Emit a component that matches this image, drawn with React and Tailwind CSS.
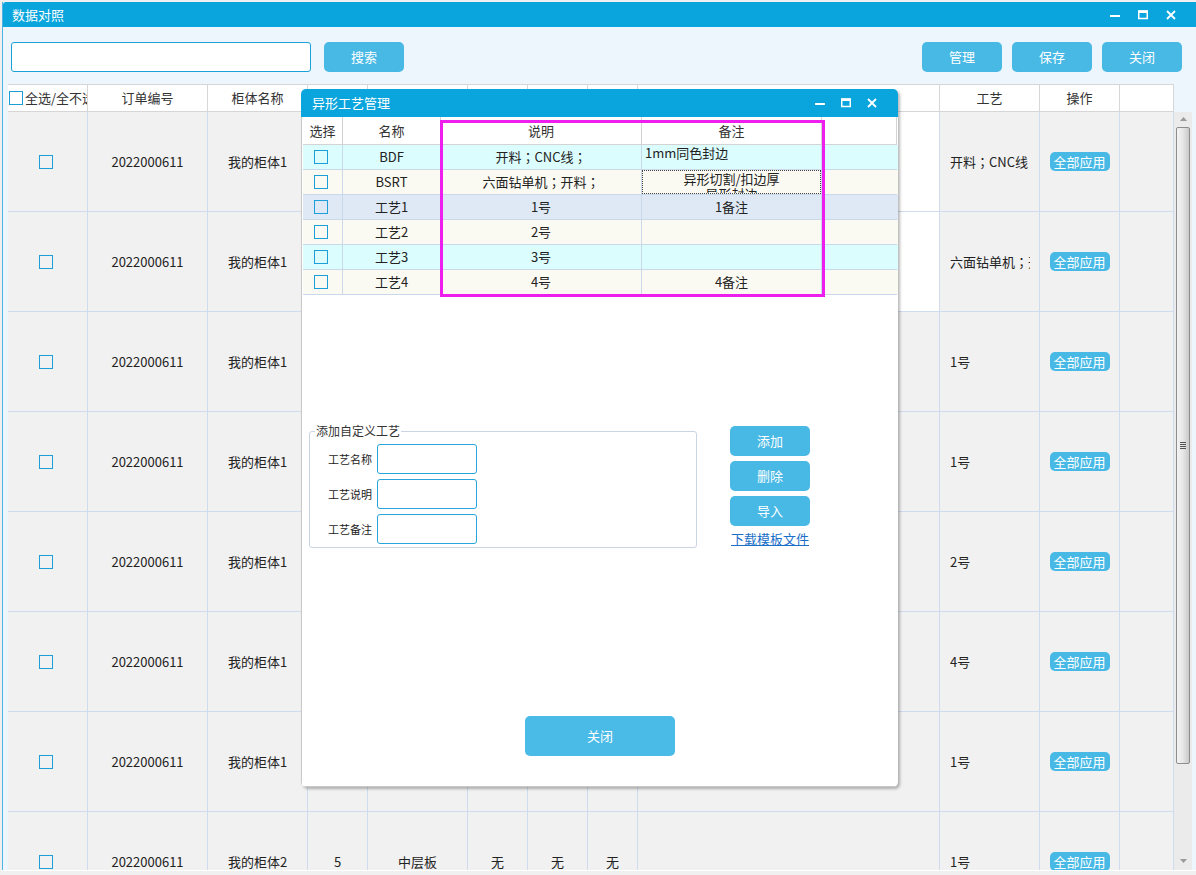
import React from 'react';

const mainCols = [80, 120, 100, 60, 100, 60, 60, 50, 302, 100, 80, 54];
const mainHeads = ['全选/全不选', '订单编号', '柜体名称', '', '', '', '', '', '', '工艺', '操作', ''];

const mainRows = [
  { name: '我的柜体1', craft: ['开料', 'CNC线'], white: true },
  { name: '我的柜体1', craft: ['六面钻单机', '开料'], white: true },
  { name: '我的柜体1', craft: '1号' },
  { name: '我的柜体1', craft: '1号' },
  { name: '我的柜体1', craft: '2号' },
  { name: '我的柜体1', craft: '4号' },
  { name: '我的柜体1', craft: '1号' },
  { name: '我的柜体2', craft: '1号', extra: ['5', '中层板', '无', '无', '无'] },
];

const crafts = [
  { bg: 'bg-[#dcfdfd]', name: 'BDF', desc: ['开料', 'CNC线'], note: '1mm同色封边', kind: 'top' },
  { bg: 'bg-[#fbfaf2]', name: 'BSRT', desc: ['六面钻单机', '开料'], note: '', kind: 'edit' },
  { bg: 'bg-[#dfe9f5]', name: '工艺1', desc: '1号', note: '1备注' },
  { bg: 'bg-[#fbfaf2]', name: '工艺2', desc: '2号', note: '' },
  { bg: 'bg-[#dcfdfd]', name: '工艺3', desc: '3号', note: '' },
  { bg: 'bg-[#fbfaf2]', name: '工艺4', desc: '4号', note: '4备注' },
];

// fullwidth semicolon drawn centred, as in the original UI font
const Semi = () => <span className="font-['Noto_Sans_CJK_TC',sans-serif]">；</span>;

const Steps = ({ items }) =>
  Array.isArray(items) ? (
    <>
      {items.map((s, i) => (
        <React.Fragment key={i}>
          {s}
          <Semi />
        </React.Fragment>
      ))}
    </>
  ) : (
    items
  );

const Controls = ({ gap }) => (
  <div className={`flex items-center ${gap}`}>
    <svg width="10" height="10" viewBox="0 0 10 10">
      <rect x="0" y="5" width="10" height="2" fill="#fff" />
    </svg>
    <svg width="10" height="10" viewBox="0 0 10 10">
      <rect x="0.75" y="1" width="8.5" height="7.5" fill="none" stroke="#fff" strokeWidth="1.5" />
      <rect x="0" y="0.5" width="10" height="2.5" fill="#fff" />
    </svg>
    <svg width="10" height="10" viewBox="0 0 10 10">
      <path d="M1 1 L9 9 M9 1 L1 9" stroke="#fff" strokeWidth="1.8" />
    </svg>
  </div>
);

const Box = ({ className = '' }) => <div className={`w-[14px] h-[14px] border border-[#1c9fd8] shrink-0 ${className}`} />;

const BlueBtn = ({ children, className = '' }) => (
  <button className={`w-[80px] h-[30px] rounded-[5px] bg-[#48b9e5] text-white text-[13px] flex items-center justify-center ${className}`}>
    {children}
  </button>
);

function MainTable() {
  return (
    <div className="w-[1166px] flex flex-col">
      {/* header */}
      <div className="flex h-[28px] bg-white border-t border-[#d6d6d6]">
        {mainHeads.map((h, i) => (
          <div
            key={i}
            style={{ width: mainCols[i] }}
            className="h-full border-r border-b border-[#d6d6d6] flex items-center justify-center text-[13px] text-[#333] overflow-hidden whitespace-nowrap"
          >
            {i === 0 ? (
              <div className="flex items-center w-full pl-[1px]">
                <Box />
                <span className="ml-[2px]">{h}</span>
              </div>
            ) : (
              h
            )}
          </div>
        ))}
      </div>
      {/* body */}
      <div className="h-[758px] overflow-hidden">
        {mainRows.map((r, ri) => {
          const ex = r.extra || ['', '', '', '', ''];
          const vals = ['', '2022000611', r.name, ...ex, '', r.craft, '', ''];
          return (
            <div key={ri} className="flex h-[100px]">
              {mainCols.map((w, i) => (
                <div
                  key={i}
                  style={{ width: w }}
                  className={`h-full border-r border-b border-[#cfdcee] flex items-center text-[13px] text-[#222] overflow-hidden whitespace-nowrap ${
                    i === 8 && r.white ? 'bg-white' : 'bg-[#f1f1f1]'
                  } ${i === 9 ? 'justify-start pl-[10px]' : 'justify-center'}`}
                >
                  {i === 0 && <Box className="-ml-[4px]" />}
                  {i === 10 && (
                    <span className="w-[60px] h-[19px] rounded-[5px] bg-[#48b9e5] text-white text-[13px] flex items-center justify-center">
                      全部应用
                    </span>
                  )}
                  {i === 9 && (
                    <span className="block w-[80px] overflow-hidden">
                      <Steps items={vals[i]} />
                    </span>
                  )}
                  {i !== 0 && i !== 9 && i !== 10 && vals[i]}
                </div>
              ))}
            </div>
          );
        })}
      </div>
    </div>
  );
}

function Scrollbar() {
  return (
    <div className="w-[18px] flex flex-col">
      <div className="h-[28px]" />
      <div className="h-[758px] bg-[#ebebeb] flex flex-col items-center">
        <svg width="7" height="4" viewBox="0 0 7 4" className="mt-[5px]">
          <path d="M0 4 L3.5 0 L7 4 Z" fill="#9a9a9a" />
        </svg>
        <div className="mt-[6px] w-[14px] h-[637px] rounded-[2px] border border-[#8d8d8d] bg-gradient-to-r from-[#f4f4f4] via-[#e6e6e6] to-[#c9c9c9] flex items-center justify-center">
          <div className="flex flex-col gap-[1px]">
            <div className="w-[6px] h-px bg-[#555]" />
            <div className="w-[6px] h-px bg-[#555]" />
            <div className="w-[6px] h-px bg-[#555]" />
            <div className="w-[6px] h-px bg-[#555]" />
          </div>
        </div>
        <svg width="7" height="4" viewBox="0 0 7 4" className="mt-[95px]">
          <path d="M0 0 L3.5 4 L7 0 Z" fill="#9a9a9a" />
        </svg>
      </div>
    </div>
  );
}

function CraftDialog() {
  const dcols = [40, 98, 201, 180, 75];
  return (
    <div className="absolute left-[301px] top-[89px] w-[597px] h-[698px] bg-white rounded-[5px] shadow-[2px_2px_3px_rgba(0,0,0,0.28)] flex flex-col overflow-hidden">
      <div className="h-[28px] bg-[#0aa5dc] flex items-center pl-[11px] pr-[21px] text-white text-[13px] shrink-0">
        <span className="flex-1">异形工艺管理</span>
        <Controls gap="gap-[16px]" />
      </div>
      <div className="flex-1 flex flex-col border-l border-b border-[#c9c9c9] relative">
        <div className="pl-[1px]">
          {/* header */}
          <div className="flex h-[28px] bg-white">
            {['选择', '名称', '说明', '备注', ''].map((h, i) => (
              <div
                key={i}
                style={{ width: dcols[i] }}
                className="h-full border-r border-b border-[#d3d3d3] flex items-center justify-center text-[13px] text-[#333]"
              >
                {h}
              </div>
            ))}
          </div>
          {crafts.map((c, ri) => (
            <div key={ri} className={`flex h-[25px] ${c.bg}`}>
              <div style={{ width: dcols[0] }} className="h-full border-r border-b border-[#cad9ea] flex items-center justify-center">
                <Box className="-ml-[4px]" />
              </div>
              <div style={{ width: dcols[1] }} className="h-full border-r border-b border-[#cad9ea] flex items-center justify-center text-[13px] text-[#222]">
                {c.name}
              </div>
              <div style={{ width: dcols[2] }} className="h-full border-r border-b border-[#cad9ea] flex items-center justify-center text-[13px] text-[#222] whitespace-nowrap">
                <Steps items={c.desc} />
              </div>
              <div style={{ width: dcols[3] }} className="h-full border-r border-b border-[#cad9ea] text-[13px] text-[#222] overflow-hidden">
                {c.kind === 'top' && <div className="pl-[3px] leading-[16px]">{c.note}</div>}
                {c.kind === 'edit' && (
                  <div className="h-full border border-dotted border-[#444] text-center leading-[15px] overflow-hidden">
                    异形切割/扣边厚
                    <br />
                    异形封边
                  </div>
                )}
                {!c.kind && <div className="h-full flex items-center justify-center">{c.note}</div>}
              </div>
              <div style={{ width: dcols[4] }} className="h-full border-b border-[#cad9ea]" />
            </div>
          ))}
        </div>

        {/* custom craft */}
        <div className="flex mt-[130px] pl-[7px]">
          <fieldset className="w-[388px] h-[123px] border border-[#c9d5e2] rounded-[3px]">
            <legend className="ml-[5px] px-[1px] text-[12px] leading-[12px] text-[#333]">添加自定义工艺</legend>
            <div className="flex flex-col gap-[5px] mt-[7px]">
              {['工艺名称', '工艺说明', '工艺备注'].map((l) => (
                <div key={l} className="flex items-center">
                  <span className="w-[67px] pr-[5px] text-right text-[11px] text-[#222]">{l}</span>
                  <div className="w-[100px] h-[30px] border border-[#27a4da] rounded-[3px] bg-white" />
                </div>
              ))}
            </div>
          </fieldset>
          <div className="ml-[33px] mt-[1px] flex flex-col gap-[5px]">
            <BlueBtn>添加</BlueBtn>
            <BlueBtn>删除</BlueBtn>
            <BlueBtn>导入</BlueBtn>
            <a href="#" className="pl-[1px] text-[13px] leading-[16px] text-[#1b6fc8] underline">
              下载模板文件
            </a>
          </div>
        </div>

        <div className="mt-[168px] pl-[223px]">
          <button className="w-[150px] h-[40px] rounded-[5px] bg-[#4abbe6] text-white text-[13px] flex items-center justify-center">
            关闭
          </button>
        </div>

        {/* highlight box */}
        <div className="absolute left-[138px] top-[3px] w-[385px] h-[177px] border-[3px] border-[#ee1fee]" />
      </div>
    </div>
  );
}

export default function App() {
  return (
    <div className="w-[1196px] h-[875px] overflow-hidden bg-[#f0f0f0] pt-[2px] pl-[2px] relative font-['Noto_Sans_CJK_SC',sans-serif]">
      <div className="h-[868px] flex flex-col bg-[#eef6fd] border-l border-[#4db4e2]">
        <div className="h-[25px] bg-[#0aa5dc] flex items-center pl-[9px] pr-[20px] text-white text-[13px] shrink-0 rounded-tl-[3px]">
          <span className="flex-1">数据对照</span>
          <Controls gap="gap-[18px]" />
        </div>
        <div className="h-[57px] flex items-start pt-[15px] pl-[8px] pr-[14px] shrink-0">
          <div className="w-[300px] h-[30px] border border-[#1ba0d8] rounded-[3px] bg-white" />
          <BlueBtn className="ml-[13px]">搜索</BlueBtn>
          <div className="ml-auto flex gap-[10px]">
            <BlueBtn>管理</BlueBtn>
            <BlueBtn>保存</BlueBtn>
            <BlueBtn>关闭</BlueBtn>
          </div>
        </div>
        <div className="flex pl-[5px]">
          <MainTable />
          <Scrollbar />
        </div>
      </div>
      <div className="h-px bg-white" />
      <CraftDialog />
    </div>
  );
}
